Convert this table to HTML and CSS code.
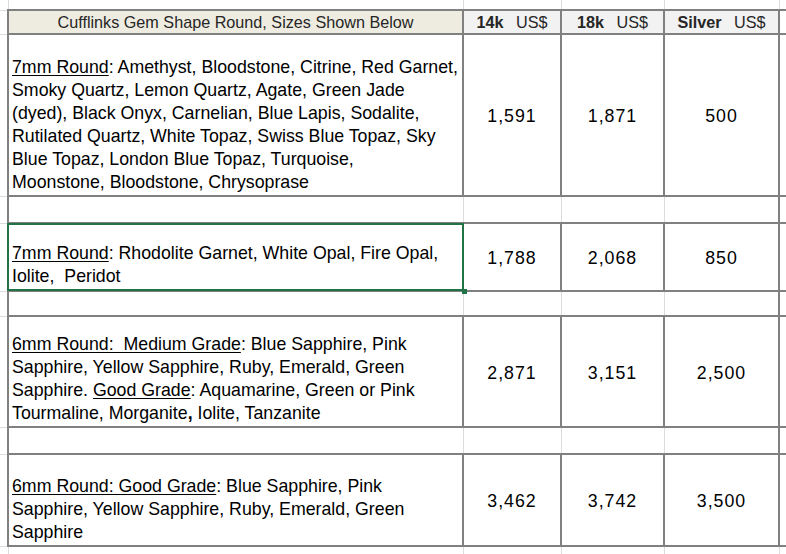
FILE: index.html
```html
<!DOCTYPE html>
<html lang="en">
<head>
<meta charset="utf-8">
<title>Cufflinks Gem Shape Round</title>
<link rel="stylesheet" href="styles.css">
</head>
<body>
<table class="sheet">
  <colgroup>
    <col class="col-gut-l">
    <col class="col-desc">
    <col class="col-14k">
    <col class="col-18k">
    <col class="col-silver">
    <col class="col-gut-r">
  </colgroup>
  <tbody>
    <tr class="row-top">
      <td class="gut gut-corner"></td>
      <td class="gut gut-top"></td>
      <td class="gut gut-top"></td>
      <td class="gut gut-top"></td>
      <td class="gut gut-top"></td>
      <td class="gut gut-r gut-r-top"></td>
    </tr>
    <tr class="row-head">
      <td class="gut gut-l"></td>
      <td class="head head-title">Cufflinks Gem Shape Round, Sizes Shown Below</td>
      <td class="head"><b>14k</b> <span class="unit">US$</span></td>
      <td class="head"><b>18k</b> <span class="unit">US$</span></td>
      <td class="head"><b>Silver</b> <span class="unit">US$</span></td>
      <td class="gut gut-r gut-r-head"></td>
    </tr>
    <tr class="row-1">
      <td class="gut gut-l"></td>
      <td class="desc"><u>7mm Round</u>: Amethyst, Bloodstone, Citrine, Red Garnet,<br>Smoky Quartz, Lemon Quartz, Agate, Green Jade<br>(dyed), Black Onyx, Carnelian, Blue Lapis, Sodalite,<br>Rutilated Quartz, White Topaz, Swiss Blue Topaz, Sky<br>Blue Topaz, London Blue Topaz, Turquoise,<br>Moonstone, Bloodstone, Chrysoprase</td>
      <td class="price">1,591</td>
      <td class="price">1,871</td>
      <td class="price">500</td>
      <td class="gut gut-r"></td>
    </tr>
    <tr class="row-gap gap-1">
      <td class="gut gut-l"></td>
      <td class="gap gap-first"></td>
      <td class="gap"></td>
      <td class="gap"></td>
      <td class="gap gap-last"></td>
      <td class="gut gut-r"></td>
    </tr>
    <tr class="row-2">
      <td class="gut gut-l"></td>
      <td class="desc desc-raised selected"><u>7mm Round</u>: Rhodolite Garnet, White Opal, Fire Opal,<br>Iolite,&nbsp; Peridot</td>
      <td class="price">1,788</td>
      <td class="price">2,068</td>
      <td class="price">850</td>
      <td class="gut gut-r"></td>
    </tr>
    <tr class="row-gap gap-2">
      <td class="gut gut-l"></td>
      <td class="gap gap-first"></td>
      <td class="gap"></td>
      <td class="gap"></td>
      <td class="gap gap-last"></td>
      <td class="gut gut-r"></td>
    </tr>
    <tr class="row-3">
      <td class="gut gut-l"></td>
      <td class="desc"><u>6mm Round:&nbsp; Medium Grade</u>: Blue Sapphire, Pink<br>Sapphire, Yellow Sapphire, Ruby, Emerald, Green<br>Sapphire. <u>Good Grade</u>: Aquamarine, Green or Pink<br>Tourmaline, Morganite<b>,</b> Iolite, Tanzanite</td>
      <td class="price">2,871</td>
      <td class="price">3,151</td>
      <td class="price">2,500</td>
      <td class="gut gut-r"></td>
    </tr>
    <tr class="row-gap gap-3">
      <td class="gut gut-l"></td>
      <td class="gap gap-first"></td>
      <td class="gap"></td>
      <td class="gap"></td>
      <td class="gap gap-last"></td>
      <td class="gut gut-r"></td>
    </tr>
    <tr class="row-4">
      <td class="gut gut-l"></td>
      <td class="desc"><u>6mm Round: Good Grade</u>: Blue Sapphire, Pink<br>Sapphire, Yellow Sapphire, Ruby, Emerald, Green<br>Sapphire</td>
      <td class="price">3,462</td>
      <td class="price">3,742</td>
      <td class="price">3,500</td>
      <td class="gut gut-r"></td>
    </tr>
    <tr class="row-bottom">
      <td class="gut gut-corner"></td>
      <td class="gut gut-bottom"></td>
      <td class="gut gut-bottom"></td>
      <td class="gut gut-bottom"></td>
      <td class="gut gut-bottom"></td>
      <td class="gut gut-corner"></td>
    </tr>
  </tbody>
</table>
</body>
</html>
```

FILE: styles.css
```css
html, body {
  margin: 0;
  padding: 0;
  background: #ffffff;
}

body {
  font-family: "Liberation Sans", Arial, sans-serif;
  color: #000000;
  overflow: hidden;
}

.sheet {
  border-collapse: collapse;
  table-layout: fixed;
  width: 786px;
}

.col-gut-l { width: 8px; }
.col-desc { width: 455px; }
.col-14k { width: 98px; }
.col-18k { width: 103px; }
.col-silver { width: 115px; }
.col-gut-r { width: 7px; }

.sheet td {
  padding: 0;
  border: 2px solid #808080;
}

/* row heights */
.row-top { height: 10px; }
.row-head { height: 24px; }
.row-1 { height: 162px; }
.gap-1 { height: 27px; }
.row-2 { height: 68px; }
.gap-2 { height: 25px; }
.row-3 { height: 111px; }
.gap-3 { height: 27px; }
.row-4 { height: 92px; }
.row-bottom { height: 8px; }

/* spreadsheet gutter cells (outside the bordered table) */
.sheet td.gut {
  border: 1px solid #dcdcdc;
}
.sheet td.gut-corner { border-left: none; border-top: none; border-right: none; border-bottom: none; }
.sheet td.gut-top { border-top: none; }
.sheet td.gut-bottom { border-bottom: none; }
.sheet td.gut-l { border-left: none; }
.sheet td.gut-r {
  border-right: none;
  border-top: 2px solid #808080;
  border-bottom: 2px solid #808080;
}
.sheet td.gut-r-top {
  border-top: none;
}
.sheet td.gut-r-head {
  border-bottom: 1px solid #dcdcdc;
}

/* header */
.head {
  background: #f2f2f2;
  color: #262626;
  font-size: 16.2px;
  line-height: 20px;
  text-align: center;
  vertical-align: middle;
  white-space: nowrap;
}
.head-title {
  background: #eeece1;
}
.head b {
  font-weight: bold;
}
.unit {
  margin-left: 8px;
}

/* description cells */
.desc {
  font-size: 17.75px;
  line-height: 23px;
  vertical-align: bottom;
  white-space: nowrap;
  padding: 0 0 1px 3px !important;
}
.desc u {
  text-decoration: underline;
  text-underline-offset: 2px;
  text-decoration-thickness: 1px;
}
.desc-raised {
  padding-bottom: 2px !important;
}

/* price cells */
.price {
  font-size: 17.75px;
  line-height: 23px;
  letter-spacing: 1px;
  text-align: center;
  vertical-align: middle;
  white-space: nowrap;
  padding-top: 3px !important;
}

/* blank separator rows */
.sheet td.gap {
  border-left: 1px solid #dcdcdc;
  border-right: 1px solid #dcdcdc;
}
.sheet td.gap-first { border-left: 2px solid #808080; }
.sheet td.gap-last { border-right: 2px solid #808080; }

/* Excel selection overlay */
.selected {
  position: relative;
}
.selected::after {
  content: "";
  position: absolute;
  left: -2px;
  top: -1px;
  right: -2px;
  bottom: -1px;
  border: 2px solid #217346;
  pointer-events: none;
}
.selected::before {
  content: "";
  position: absolute;
  right: -5px;
  bottom: -4px;
  width: 5px;
  height: 5px;
  background: #217346;
  z-index: 1;
}
```
